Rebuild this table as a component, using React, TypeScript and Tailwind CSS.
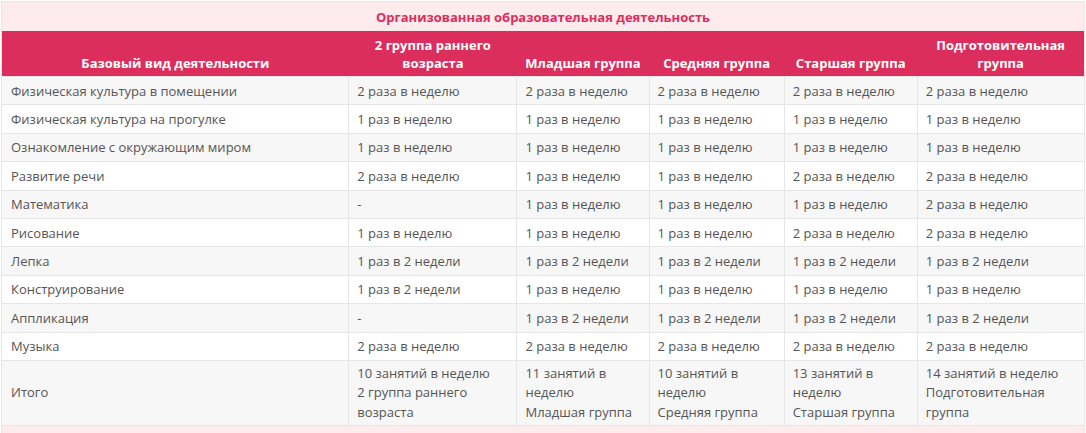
const groups: string[][] = [
  ["2 группа раннего", "возраста"],
  ["Младшая группа"],
  ["Средняя группа"],
  ["Старшая группа"],
  ["Подготовительная", "группа"],
];

const rows: [string, string[]][] = [
  ["Физическая культура в помещении", ["2 раза в неделю", "2 раза в неделю", "2 раза в неделю", "2 раза в неделю", "2 раза в неделю"]],
  ["Физическая культура на прогулке", ["1 раз в неделю", "1 раз в неделю", "1 раз в неделю", "1 раз в неделю", "1 раз в неделю"]],
  ["Ознакомление с окружающим миром", ["1 раз в неделю", "1 раз в неделю", "1 раз в неделю", "1 раз в неделю", "1 раз в неделю"]],
  ["Развитие речи", ["2 раза в неделю", "1 раз в неделю", "1 раз в неделю", "2 раза в неделю", "2 раза в неделю"]],
  ["Математика", ["-", "1 раз в неделю", "1 раз в неделю", "1 раз в неделю", "2 раза в неделю"]],
  ["Рисование", ["1 раз в неделю", "1 раз в неделю", "1 раз в неделю", "2 раза в неделю", "2 раза в неделю"]],
  ["Лепка", ["1 раз в 2 недели", "1 раз в 2 недели", "1 раз в 2 недели", "1 раз в 2 недели", "1 раз в 2 недели"]],
  ["Конструирование", ["1 раз в 2 недели", "1 раз в неделю", "1 раз в неделю", "1 раз в неделю", "1 раз в неделю"]],
  ["Аппликация", ["-", "1 раз в 2 недели", "1 раз в 2 недели", "1 раз в 2 недели", "1 раз в 2 недели"]],
  ["Музыка", ["2 раза в неделю", "2 раза в неделю", "2 раза в неделю", "2 раза в неделю", "2 раза в неделю"]],
];

const totals = [
  ["10 занятий в неделю", "2 группа раннего возраста"],
  ["11 занятий в неделю", "Младшая группа"],
  ["10 занятий в неделю", "Средняя группа"],
  ["13 занятий в неделю", "Старшая группа"],
  ["14 занятий в неделю", "Подготовительная группа"],
];

const widths = ["w-[347px]", "w-[168px]", "w-[132px]", "w-[135px]", "w-[133px]", "w-[167px]"];

export default function App() {
  return (
    <div className="bg-white p-px" style={{ fontFamily: '"Open Sans", "DejaVu Sans", sans-serif' }}>
      <table className="w-[1084px] table-fixed border-collapse border border-[#e6e6e6] text-[13px] text-[#555]">
        <colgroup>
          {widths.map((w, i) => (
            <col key={i} className={w} />
          ))}
        </colgroup>
        <thead>
          <tr className="bg-[#fdebee]">
            <th colSpan={6} className="h-[29px] pt-[2px] text-center font-bold text-[#dc2e5c]">
              Организованная образовательная деятельность
            </th>
          </tr>
          <tr className="bg-[#dc2e5c] text-white">
            <th className="h-[46px] px-2 pb-[4px] align-bottom font-bold leading-[18px]">
              Базовый вид деятельности
            </th>
            {groups.map((g) => (
              <th key={g[0]} className="px-1 pb-[4px] align-bottom font-bold leading-[18px]">
                {g.map((line, k) => (
                  <div key={k}>{line}</div>
                ))}
              </th>
            ))}
          </tr>
        </thead>
        <tbody>
          {rows.map(([name, vals], i) => (
            <tr key={name} className={i % 2 === 0 ? "bg-[#f7f7f7]" : "bg-white"}>
              <td className="h-[28.4px] border border-[#e6e6e6] px-[9px] pt-[1px] leading-[19px]">{name}</td>
              {vals.map((v, j) => (
                <td key={j} className="border border-[#e6e6e6] px-[8px] pt-[1px] leading-[19px]">
                  {v}
                </td>
              ))}
            </tr>
          ))}
          <tr className="bg-[#f7f7f7]">
            <td className="h-[64px] border border-[#e6e6e6] px-[9px] leading-[19.5px]">Итого</td>
            {totals.map((t, j) => (
              <td key={j} className="border border-[#e6e6e6] px-[8px] py-[3px] leading-[19.5px]">
                {t[0]}
                <br />
                {t[1]}
              </td>
            ))}
          </tr>
          <tr className="bg-[#fdebee]">
            <td colSpan={6} className="h-[20px]" />
          </tr>
        </tbody>
      </table>
    </div>
  );
}
